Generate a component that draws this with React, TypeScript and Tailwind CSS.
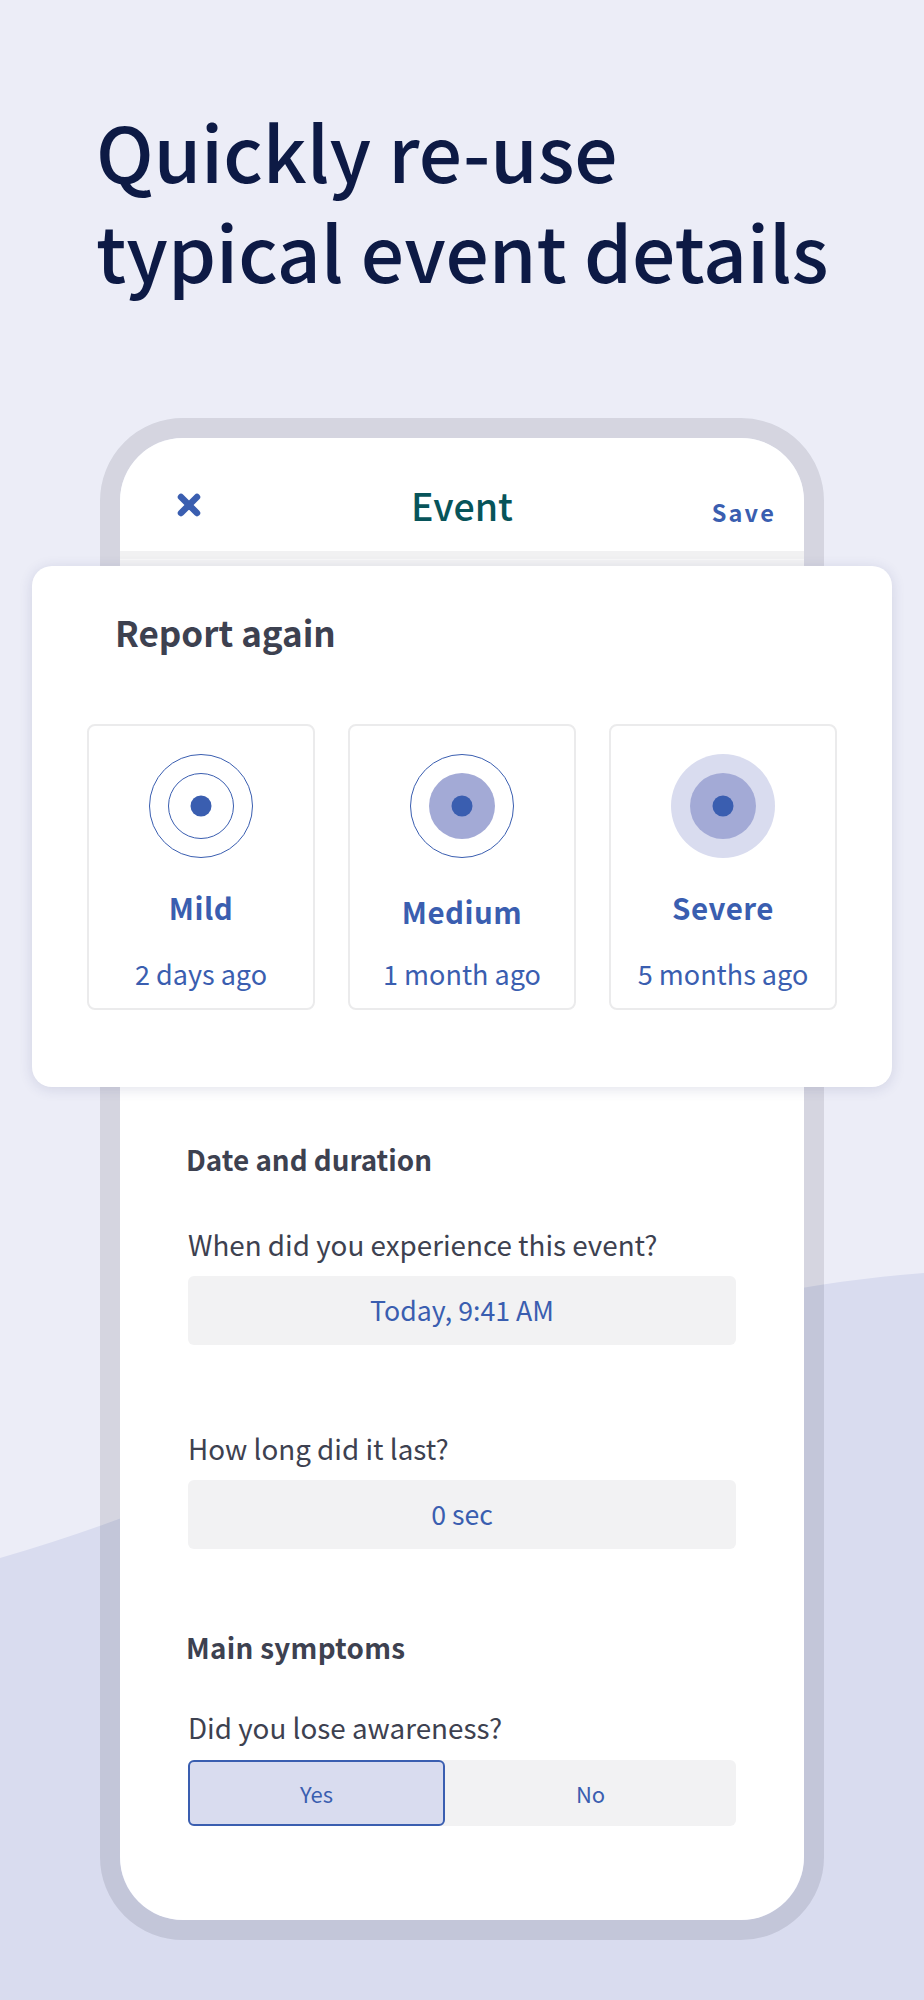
const font = "font-['Noto_Sans_CJK_SC','Noto_Sans_CJK_JP',sans-serif]";

const levels = [
  { name: "Mild", ago: "2 days ago", middle: "none", outer: "none", offset: "mt-[29px]" },
  { name: "Medium", ago: "1 month ago", middle: "#a3aad6", outer: "none", offset: "mt-[33px]" },
  { name: "Severe", ago: "5 months ago", middle: "#a3aad6", outer: "#d9dcef", offset: "mt-[29px]" },
];

const Rings: React.FC<{ middle: string; outer: string }> = ({ middle, outer }) => (
  <svg width="104" height="104" viewBox="0 0 104 104" aria-hidden="true">
    <circle
      cx="52"
      cy="52"
      r={outer === "none" ? 51.5 : 52}
      fill={outer}
      stroke={outer === "none" ? "#3a5eb0" : "none"}
      strokeWidth="1"
    />
    <circle
      cx="52"
      cy="52"
      r={middle === "none" ? 32.5 : 33}
      fill={middle}
      stroke={middle === "none" ? "#3a5eb0" : "none"}
      strokeWidth="1"
    />
    <circle cx="52" cy="52" r="10.5" fill="#3a5eb0" />
  </svg>
);

const Field: React.FC<{ label: string; value: string; className?: string }> = ({ label, value, className }) => (
  <div className={className}>
    <p className="text-[27.8px] leading-[40px] text-[#3d4150]">{label}</p>
    <div className="mt-[12px] h-[69px] rounded-md bg-[#f2f2f3] flex items-center justify-center text-[26.7px] text-[#3a5eb0]">
      {value}
    </div>
  </div>
);

export default function App() {
  return (
    <div className={`relative w-[924px] h-[2000px] overflow-hidden bg-[#ecedf7] ${font}`}>
      <svg className="absolute left-0 top-0" width="924" height="2000" viewBox="0 0 924 2000" aria-hidden="true">
        <path d="M0 1558 C 270 1482, 560 1300, 924 1273 L924 2000 L0 2000 Z" fill="#d9dcef" />
      </svg>

      <div className="relative pt-[100px] pl-[96px]">
        <h1 className="text-[76.5px] leading-[100px] font-medium text-[#0d1a45]">
          Quickly re-use
          <br />
          typical event details
        </h1>
      </div>

      <div className="relative mt-[118px] ml-[100px] w-[724px] h-[1522px] rounded-[83px] border-[20px] border-[#0a0a1e]/10 bg-clip-padding">
        <div className="h-full rounded-[63px] bg-white">
          <div className="grid h-[113px] grid-cols-[1fr_auto_1fr] px-[28px]">
            <svg className="mt-[55px] ml-[29px]" width="24" height="24" viewBox="0 0 24 24" aria-hidden="true">
              <path d="M4 4 L20 20 M20 4 L4 20" stroke="#3a5eb0" strokeWidth="6.5" strokeLinecap="round" fill="none" />
            </svg>
            <span className="mt-[37px] h-fit text-[37.5px] leading-[60px] font-medium text-[#07545a]">Event</span>
            <span className="mt-[55px] h-fit justify-self-end text-[23.5px] leading-[38px] font-semibold tracking-[2.2px] text-[#3a5eb0]">Save</span>
          </div>
          <div className="h-[8px] bg-[#f1f1f2]" />
          <div className="h-[7px] border-t border-[#f8f8f8] bg-[#f3f3f4]" />

          <div className="relative mx-[-88px] h-[521px] rounded-[20px] bg-white shadow-[0_2px_14px_rgba(40,50,110,0.14)] px-[55px]">
            <h2 className="pt-[41px] pl-[28px] text-[35px] leading-[50px] font-semibold text-[#3d4150]">Report again</h2>
            <div className="mt-[67px] flex justify-between">
              {levels.map((level) => (
                <div
                  key={level.name}
                  className="flex h-[286px] w-[228px] flex-col items-center rounded-lg border-2 border-[#ebebec] pt-[28px]"
                >
                  <Rings middle={level.middle} outer={level.outer} />
                  <span className={`${level.offset} text-[29.5px] leading-[40px] font-semibold tracking-[0.5px] text-[#3a5eb0]`}>
                    {level.name}
                  </span>
                  <span className="absolute mt-[200px] text-[27px] leading-[40px] text-[#3a5eb0]">
                    {level.ago}
                  </span>
                </div>
              ))}
            </div>
          </div>

          <div className="px-[68px]">
            <h3 className="ml-[-2px] mt-[52px] text-[27.8px] leading-[40px] font-semibold text-[#3d4150]">Date and duration</h3>
            <Field className="mt-[45px]" label="When did you experience this event?" value="Today, 9:41 AM" />
            <Field className="mt-[83px]" label="How long did it last?" value="0 sec" />
            <h3 className="ml-[-2px] mt-[78px] text-[27.8px] leading-[40px] font-semibold tracking-[0.3px] text-[#3d4150]">Main symptoms</h3>
            <p className="mt-[40px] text-[27.8px] leading-[40px] text-[#3d4150]">Did you lose awareness?</p>
            <div className="mt-[13px] flex h-[66px] rounded-md bg-[#f2f2f3] text-[22px] text-[#3a5eb0]">
              <div className="flex w-[257px] items-center justify-center rounded-md border-2 border-[#3a5eb0] bg-[#d9dcef]">Yes</div>
              <div className="flex flex-1 items-center justify-center">No</div>
            </div>
          </div>
        </div>
      </div>
    </div>
  );
}
